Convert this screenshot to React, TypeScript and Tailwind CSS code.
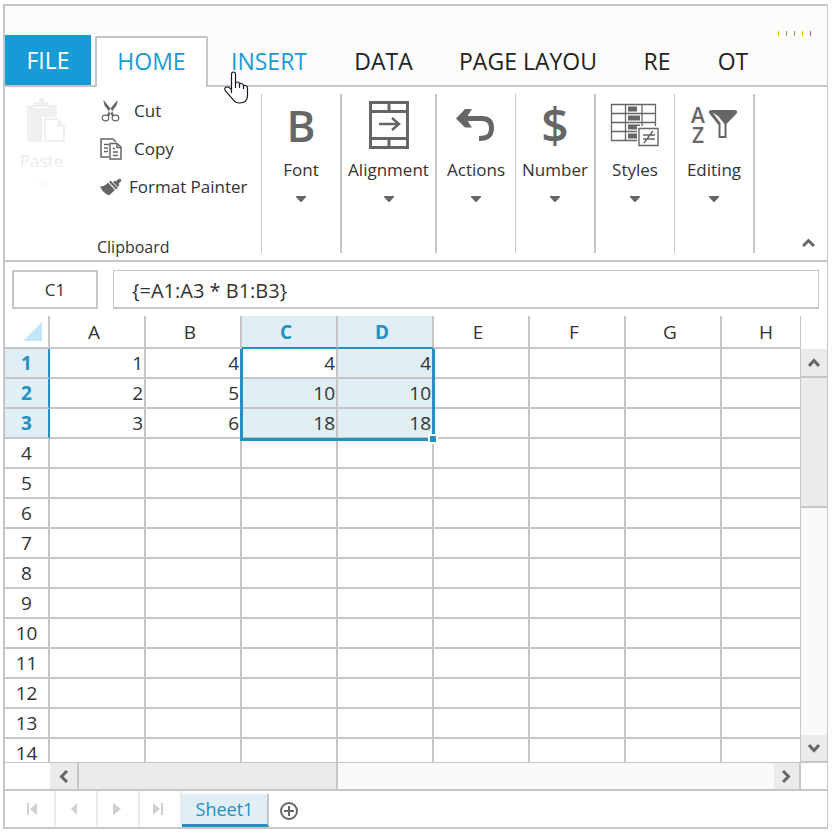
import React from "react";

const columns = ["A", "B", "C", "D", "E", "F", "G", "H"];
const rows = Array.from({ length: 14 }, (_, i) => i + 1);
const values: Record<number, string[]> = {
  1: ["1", "4", "4", "4"],
  2: ["2", "5", "10", "10"],
  3: ["3", "6", "18", "18"],
};

const tabs = [
  { label: "INSERT", className: "w-[122px] text-[#179bd7]" },
  { label: "DATA", className: "w-[107px] text-[#222]" },
  { label: "PAGE LAYOU", className: "w-[182px] text-[#222]" },
  { label: "RE", className: "w-[76px] text-[#222]" },
  { label: "OT", className: "w-[76px] text-[#222]" },
];

function PasteIcon() {
  return (
    <svg width="40" height="48" viewBox="0 0 40 48" fill="#f0f0f0" aria-hidden="true">
      <path d="M1 10q0-2 2-2h5v3h15v-3h5q3 0 3 2v10H16v25H3q-2 0-2-2z" />
      <path d="M8 10V5h5V2q3-3 5 0v3h5v5z" />
      <path d="M18 21h14l7 8v16H18zm2 2v20h17V30h-6v-7z" />
    </svg>
  );
}

function CutIcon() {
  return (
    <svg className="shrink-0" width="20" height="22" viewBox="0 0 20 22" fill="none" stroke="#666" strokeWidth="1.200" aria-hidden="true">
      <path d="M2.500 0q0 5 3 8l5.500 8 2-1L10 9zM16.500 0q0 5-3 8L8 16l-2-1L9 9z" fill="#666" stroke="none" />
      <ellipse cx="4.500" cy="18" rx="3.300" ry="2.800" />
      <ellipse cx="14.500" cy="18" rx="3.300" ry="2.800" />
    </svg>
  );
}

function CopyIcon() {
  return (
    <svg className="shrink-0" width="22" height="22" viewBox="0 0 22 22" fill="none" stroke="#666" strokeWidth="1.500" aria-hidden="true">
      <path d="M9 19H1V1h12l3 3M4 6.500h5M4 10h4M4 13.500h4" />
      <path d="M10 5.500h7l4 3.500v12H10z" fill="#fff" />
      <path d="M17 6v3.500h4M13 10.500h2M13 14h5M13 17.500h5" />
    </svg>
  );
}

function PainterIcon() {
  return (
    <svg className="shrink-0" width="22" height="18" viewBox="0 0 22 18" fill="#666" aria-hidden="true">
      <path d="M0 8.500q5 0 8-4l7 7.500-6 5.500Q3 15 0 8.500z" />
      <path d="M9 4l1.500-1.500 7.500 7.500-2 1.500zM13 4l1.500-1.500 1 1L18.500 1q2.500-1 3 1.500L18.500 6l1 1-1.500 2z" />
    </svg>
  );
}

function AlignmentIcon() {
  return (
    <svg width="40" height="48" viewBox="0 0 40 48" fill="none" stroke="#666" strokeWidth="3" aria-hidden="true">
      <path d="M1.500 1.500h37v45h-37zM1.500 10.500h37M1.500 37.500h37M20 2v8M20 38v8" />
      <path d="M10 23h20M23 17l7 6-7 6" strokeWidth="2.500" />
    </svg>
  );
}

function ActionsIcon() {
  return (
    <svg width="40" height="48" viewBox="0 0 40 48" aria-hidden="true">
      <path d="M9 17.500h17c7 0 9.500 4 9.500 9.500 0 8-4 10.500-12.500 10.500" fill="none" stroke="#666" strokeWidth="5" />
      <path d="M0 17.500L9 8h7l-6 9.500 6 9H9z" fill="#666" />
    </svg>
  );
}

function StylesIcon() {
  return (
    <svg width="50" height="48" viewBox="0 0 50 48" aria-hidden="true">
      <g fill="none" stroke="#666" strokeWidth="1.300">
        <path d="M1.500 3.500h44v36h-44zM15.500 3.500v36M32 3.500v36M1.500 12.500h44M1.500 21.500h44M1.500 30.500h44" />
      </g>
      <path d="M18 5.500h9v5h-9zM18 14.500h12v5H18zM18 23.500h12v5H18zM18 32.500h9v5h-9z" fill="#666" />
      <path d="M27 25h23v23H27z" fill="#fff" />
      <path d="M29 27.500h19v17H29zM33 34h12M33 38h12M43 30L34 42" fill="none" stroke="#666" strokeWidth="1.400" />
    </svg>
  );
}

function EditingIcon() {
  return (
    <span className="flex items-center gap-1 text-[#666]">
      <span className="flex flex-col items-center text-[21px] font-semibold leading-5">
        <span className="h-5">A</span>
        <span className="h-5">Z</span>
      </span>
      <svg width="28" height="30" viewBox="0 0 28 30" aria-hidden="true">
        <path d="M0 1q1-1 3-1h22q2 0 3 1v2L17.500 14v14H9.500V15L0 3z" fill="#666" />
        <path d="M3.500 2.500l8 10.500V26h4V14L9 6z" fill="#fff" />
      </svg>
    </span>
  );
}

function Caret({ className = "text-[#666]" }: { className?: string }) {
  return (
    <svg className={className} width="12" height="6" viewBox="0 0 12 6" aria-hidden="true">
      <path d="M1 0h10v1L6.500 6h-1L1 1z" fill="currentColor" />
    </svg>
  );
}

function Chevron({ d, w = 12, h = 9 }: { d: string; w?: number; h?: number }) {
  return (
    <svg width={w} height={h} viewBox={`0 0 ${w} ${h}`} fill="none" stroke="#666" strokeWidth="3" aria-hidden="true">
      <path d={d} />
    </svg>
  );
}

const groups = [
  { label: "Font", icon: <span className="text-[44px] font-semibold leading-[44px] text-[#666]">B</span>, className: "w-20 border-r-2" },
  { label: "Alignment", icon: <AlignmentIcon />, className: "w-[95px] border-r-2" },
  { label: "Actions", icon: <ActionsIcon />, className: "w-[79px] border-r" },
  { label: "Number", icon: <span className="text-5xl font-semibold leading-[48px] text-[#666]">$</span>, className: "w-20 border-r-2" },
  { label: "Styles", icon: <StylesIcon />, className: "w-[79px] border-r" },
  { label: "Editing", icon: <EditingIcon />, className: "w-20 border-r-2" },
];

const clipboardItems = [
  { label: "Cut", icon: <CutIcon />, gap: "gap-3" },
  { label: "Copy", icon: <CopyIcon />, gap: "gap-3" },
  { label: "Format Painter", icon: <PainterIcon />, gap: "gap-[7px]" },
];

const pager = [
  { label: "First sheet", d: "M1 0h2v12H1zM11 0v12L4 6z", className: "w-[51px] pl-1" },
  { label: "Previous sheet", d: "M9 0v12L3 6z", className: "w-[42px] pr-1" },
  { label: "Next sheet", d: "M3 0v12l8-6z", className: "w-[42px] pr-1" },
  { label: "Last sheet", d: "M1 0v12l7-6zM9 0h2v12H9z", className: "w-[42px] pr-1" },
];

function TabStrip() {
  return (
    <div className="flex h-[81px] items-end border-b-2 border-[#c6c6c6] bg-[#fcfcfc] text-[23px]">
      <button className="mr-1 h-[50px] w-[86px] bg-[#179bd7] text-white">FILE</button>
      <button className="-mb-0.5 h-[51px] w-[113px] rounded-t-xs border-2 border-b-0 border-[#c6c6c6] bg-white pb-0.5 text-[#179bd7]">
        HOME
      </button>
      {tabs.map((t) => (
        <button key={t.label} className={`h-[50px] whitespace-nowrap pt-0.5 ${t.className}`}>
          {t.label}
        </button>
      ))}
      <div className="mb-[49px] ml-auto mr-4 flex gap-[7px]">
        <i className="h-[5px] w-px bg-[#f3c614]" />
        <i className="h-[5px] w-px bg-[#8fa62b]" />
        <i className="h-[5px] w-px bg-[#8fa62b]" />
        <i className="h-[5px] w-px bg-[#f3c614]" />
        <i className="h-[5px] w-px bg-[#cf4a9b]" />
      </div>
    </div>
  );
}

function Ribbon() {
  return (
    <div className="flex h-[175px] border-b-2 border-[#c6c6c6] py-[7px] text-[17px] text-[#333]">
      <div className="flex w-[257px] shrink-0 border-r border-[#c6c6c6]">
        <button className="flex w-[73px] flex-col items-center self-start pt-[3px] text-[#ebebeb]" disabled>
          <span className="pl-2">
            <PasteIcon />
          </span>
          <span className="mt-1 leading-6">Paste</span>
          <Caret className="mt-2 text-[#fafafa]" />
        </button>
        <div className="flex flex-1 flex-col pl-[22px]">
          {clipboardItems.map((c) => (
            <button key={c.label} className="flex h-[38px] items-center pb-1 text-left">
              <span className={`flex items-center ${c.gap}`}>
                <span className="flex w-[22px] justify-center">{c.icon}</span>
                <span className="whitespace-nowrap">{c.label}</span>
              </span>
            </button>
          ))}
          <span className="-ml-[3px] mt-auto text-base leading-3">Clipboard</span>
        </div>
      </div>
      {groups.map((g) => (
        <div key={g.label} className={`shrink-0 border-[#c6c6c6] ${g.className}`}>
          <button className="flex w-full flex-col items-center pt-[7px]">
            <span className="flex h-12 items-center">{g.icon}</span>
            <span className="mt-[7px] leading-7">{g.label}</span>
            <Caret className="mt-3 text-[#666]" />
          </button>
        </div>
      ))}
      <button className="mb-[6px] ml-auto mr-3 self-end" aria-label="Collapse ribbon">
        <Chevron d="M1 8l5.500-5.500L12 8" w={13} h={9} />
      </button>
    </div>
  );
}

function FormulaBar() {
  return (
    <div className="flex gap-[15px] pb-[7px] pl-[7px] pr-2 pt-2 text-[#333]">
      <input
        aria-label="Name box"
        defaultValue="C1"
        className="h-[39px] w-[86px] border-2 border-[#c6c6c6] text-center text-[17px]"
      />
      <input
        aria-label="Formula bar"
        defaultValue="{=A1:A3 * B1:B3}"
        className="h-[39px] min-w-0 flex-1 border border-b-2 border-[#c6c6c6] px-[18px] pt-0.5 text-xl"
      />
    </div>
  );
}

function Grid() {
  return (
    <div className="relative min-w-0 flex-1 overflow-hidden border-r border-[#c6c6c6]">
      <table className="w-[813px] table-fixed border-separate border-spacing-0 text-[19px] text-[#333]">
        <thead>
          <tr className="h-[33px]">
            <th className="w-[45px] border-b-2 border-r-2 border-[#c6c6c6] p-0">
              <svg className="ml-[18px]" width="19" height="19" viewBox="0 0 19 19" aria-hidden="true">
                <path d="M19 0v19H0z" fill="#c3e6f8" />
              </svg>
            </th>
            {columns.map((c) => (
              <th
                key={c}
                scope="col"
                className={`w-24 border-b-2 border-r-2 p-0 pr-[6px] pt-0.5 ${
                  c === "C" || c === "D"
                    ? "border-[#c6c6c6] border-b-[#2591c2] bg-[#e0eef5] font-bold text-[#2591c2]"
                    : "border-[#c6c6c6] font-normal"
                }`}
              >
                {c}
              </th>
            ))}
          </tr>
        </thead>
        <tbody>
          {rows.map((r) => (
            <tr key={r} className="h-[30px]">
              <th
                scope="row"
                className={`border-b-2 border-r-2 p-0 leading-7 ${
                  r <= 3
                    ? "border-[#c6c6c6] border-r-[#2591c2] bg-[#e0eef5] font-bold text-[#2591c2]"
                    : "border-[#c6c6c6] font-normal"
                }`}
              >
                {r}
              </th>
              {columns.map((c, i) => (
                <td
                  key={c}
                  className={`border-b-2 border-r-2 border-[#c6c6c6] p-0 pr-px text-right leading-7 ${
                    r <= 3 && (c === "D" || (c === "C" && r > 1)) ? "bg-[#e0eef5]" : ""
                  }`}
                >
                  {values[r]?.[i] ?? ""}
                </td>
              ))}
            </tr>
          ))}
        </tbody>
      </table>
      <div className="pointer-events-none absolute left-[235px] top-[33px] h-[92px] w-[195px] border-x-3 border-b-3 border-[#2591c2]">
        <span className="absolute -bottom-[6px] -right-[6px] size-[10px] border-2 border-white bg-[#2591c2]" />
      </div>
    </div>
  );
}

function VerticalScroll() {
  return (
    <div className="mt-[33px] flex w-[26px] flex-col bg-[#fafafa]">
      <button className="flex h-[29px] items-center justify-center border-b-2 border-[#c6c6c6] bg-[#ebebeb]" aria-label="Scroll up">
        <Chevron d="M1 8l5-5.500L11 8" />
      </button>
      <div className="h-[130px] border-b-2 border-[#c6c6c6] bg-[#ebebeb]" />
      <button className="mt-auto flex h-[27px] items-center justify-center border-b border-[#c6c6c6] bg-[#ebebeb]" aria-label="Scroll down">
        <Chevron d="M1 1l5 5.500L11 1" />
      </button>
    </div>
  );
}

function HorizontalScroll() {
  return (
    <div className="flex h-7 border-b-2 border-[#c6c6c6] pl-[45px] pr-[26px]">
      <div className="flex flex-1 bg-[#fafafa]">
        <button className="flex w-[29px] items-center justify-center border-r-2 border-[#c6c6c6] bg-[#ebebeb]" aria-label="Scroll left">
          <Chevron d="M8 1L2.500 6.500 8 12" w={9} h={13} />
        </button>
        <div className="w-[259px] border-r-2 border-[#c6c6c6] bg-[#ebebeb]" />
        <button className="ml-auto flex w-[27px] items-center justify-center border-r-2 border-[#c6c6c6] bg-[#ebebeb]" aria-label="Scroll right">
          <Chevron d="M1 1l5.500 5.500L1 12" w={9} h={13} />
        </button>
      </div>
    </div>
  );
}

function SheetBar() {
  return (
    <div className="flex h-9">
      {pager.map((p) => (
        <button
          key={p.label}
          aria-label={p.label}
          className={`mb-px flex items-center justify-center border-r-2 border-[#ebebeb] ${p.className}`}
        >
          <svg width="12" height="12" viewBox="0 0 12 12" fill="#d0d0d0" aria-hidden="true">
            <path d={p.d} />
          </svg>
        </button>
      ))}
      <button className="mt-[3px] w-[87px] border-b-3 border-r-2 border-[#c6c6c6] border-b-[#2591c2] bg-[#e0eef5] text-lg text-[#2591c2]">
        Sheet1
      </button>
      <button className="ml-[10px] mt-1" aria-label="Add sheet">
        <svg width="20" height="20" viewBox="0 0 20 20" fill="none" stroke="#666" strokeWidth="2" aria-hidden="true">
          <circle cx="10" cy="10" r="8" />
          <path d="M10 5v10M5 10h10" />
        </svg>
      </button>
    </div>
  );
}

export default function App() {
  return (
    <div className="bg-white pb-[6px] pl-[3px] pr-[5px] pt-1 font-['Open_Sans',sans-serif]">
      <div className="relative border-2 border-r border-[#c6c6c6] bg-white">
        <TabStrip />
        <Ribbon />
        <FormulaBar />
        <div className="flex h-[447px] border-b border-[#c6c6c6]">
          <Grid />
          <VerticalScroll />
        </div>
        <HorizontalScroll />
        <SheetBar />
        <svg className="absolute left-[218px] top-[65px]" width="26" height="34" viewBox="0 0 26 34" aria-hidden="true">
          <path
            d="M8.500 22V3.500q0-2.500 2-2.500t2 2.500V13q0-2 2-2t2 2v1q0-2 2-1.500t2 2.500v1q0-2 2-1.500t2 2.500v7.500q0 7.500-8 7.500-4 0-6-3l-8-9q-2-3 1-4 2-.5 5 2.500zM12.500 12v5M16.500 14v3M20.500 15v3"
            fill="#fff"
            stroke="#1a1626"
            strokeWidth="1.200"
          />
        </svg>
      </div>
    </div>
  );
}
